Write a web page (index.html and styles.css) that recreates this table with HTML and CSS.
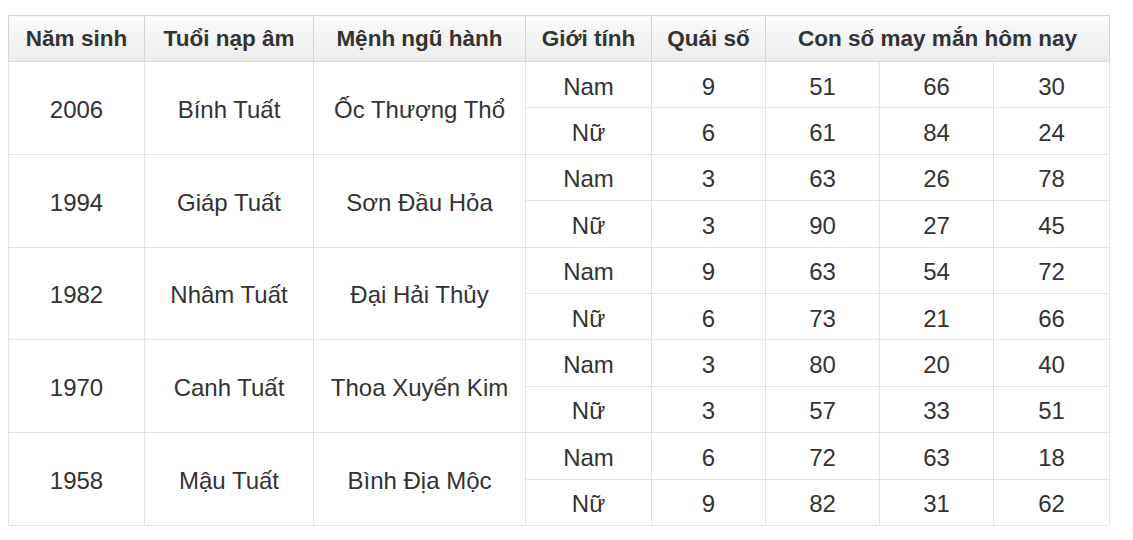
FILE: index.html
```html
<!DOCTYPE html>
<html lang="vi">
<head>
<meta charset="utf-8">
<link rel="stylesheet" href="styles.css">
</head>
<body>
<div class="wrap">
<table class="tbl">
<colgroup>
<col style="width:136px"><col style="width:169px"><col style="width:212px"><col style="width:126px"><col style="width:114px"><col style="width:114px"><col style="width:114px"><col style="width:116px">
</colgroup>
<thead>
<tr><th>Năm sinh</th><th>Tuổi nạp âm</th><th>Mệnh ngũ hành</th><th>Giới tính</th><th>Quái số</th><th colspan="3">Con số may mắn hôm nay</th></tr>
</thead>
<tbody>
<tr><td rowspan="2">2006</td><td rowspan="2">Bính Tuất</td><td rowspan="2">Ốc Thượng Thổ</td><td>Nam</td><td>9</td><td>51</td><td>66</td><td>30</td></tr>
<tr><td>Nữ</td><td>6</td><td>61</td><td>84</td><td>24</td></tr>
<tr><td rowspan="2">1994</td><td rowspan="2">Giáp Tuất</td><td rowspan="2">Sơn Đầu Hỏa</td><td>Nam</td><td>3</td><td>63</td><td>26</td><td>78</td></tr>
<tr><td>Nữ</td><td>3</td><td>90</td><td>27</td><td>45</td></tr>
<tr><td rowspan="2">1982</td><td rowspan="2">Nhâm Tuất</td><td rowspan="2">Đại Hải Thủy</td><td>Nam</td><td>9</td><td>63</td><td>54</td><td>72</td></tr>
<tr><td>Nữ</td><td>6</td><td>73</td><td>21</td><td>66</td></tr>
<tr><td rowspan="2">1970</td><td rowspan="2">Canh Tuất</td><td rowspan="2">Thoa Xuyến Kim</td><td>Nam</td><td>3</td><td>80</td><td>20</td><td>40</td></tr>
<tr><td>Nữ</td><td>3</td><td>57</td><td>33</td><td>51</td></tr>
<tr><td rowspan="2">1958</td><td rowspan="2">Mậu Tuất</td><td rowspan="2">Bình Địa Mộc</td><td>Nam</td><td>6</td><td>72</td><td>63</td><td>18</td></tr>
<tr><td>Nữ</td><td>9</td><td>82</td><td>31</td><td>62</td></tr>
</tbody>
</table>
</div>
</body>
</html>
```
FILE: styles.css
```css
html, body {
  margin: 0;
  padding: 0;
  background: #fff;
}
.wrap {
  padding: 15px 0 0 8px;
}
.tbl {
  width: 1101px;
  border-collapse: collapse;
  table-layout: fixed;
  font-family: "Liberation Sans", Arial, sans-serif;
  color: #333;
}
.tbl th {
  height: 45px;
  padding: 0;
  font-size: 22.5px;
  font-weight: bold;
  text-align: center;
  background: linear-gradient(to bottom, #fbfbfb, #ececec);
  border: 1px solid #d4d4d4;
  border-bottom-color: #dcdcdc;
}
.tbl th + th {
  border-left-color: transparent;
}
.tbl td {
  height: 41.4px;
  padding: 4px 0 0;
  font-size: 24px;
  text-align: center;
  vertical-align: middle;
  border: 1px solid #e3e3e3;
}
```
